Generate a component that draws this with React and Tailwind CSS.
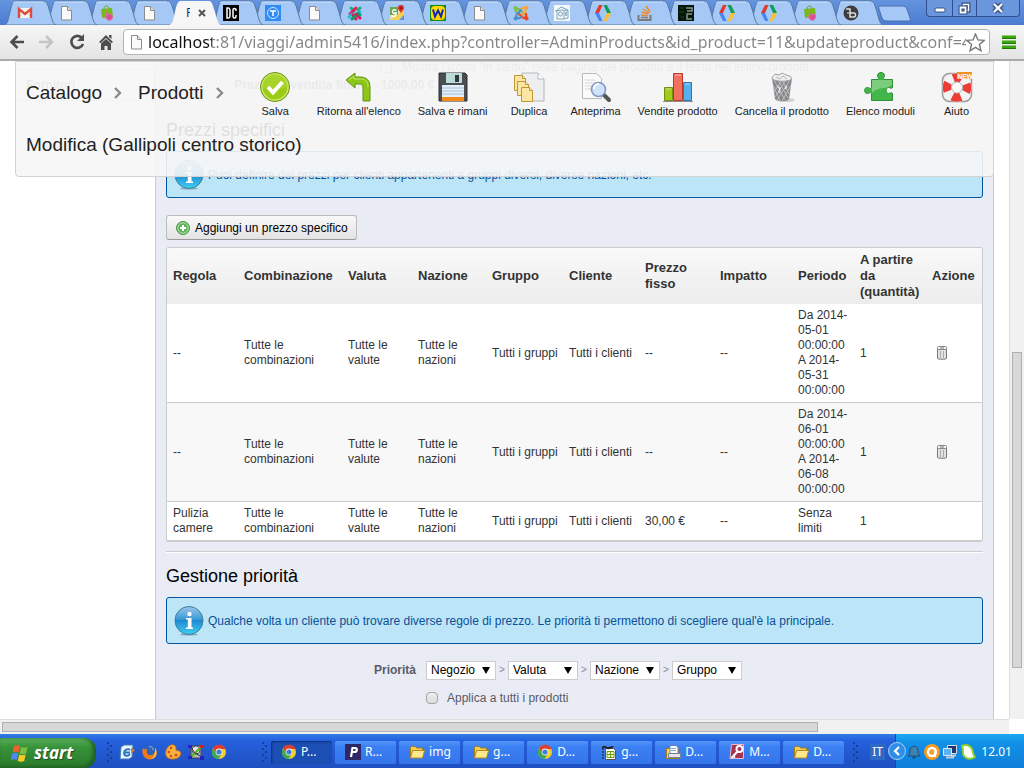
import { useId, useState } from "react";

const cx = (...names) => names.filter(Boolean).join(" ");

/* ---------- favicons ---------- */

const PageIcon = () => (
  <svg viewBox="0 0 16 16" className="size-4">
    <path d="M3.5 1.5h6l4 4v9.500h-10z" fill="#fafafa" stroke="#8b8b8b" />
    <path d="M9.500 1.500v4h4" fill="#e4e4e4" stroke="#8b8b8b" />
  </svg>
);

const GmailIcon = () => (
  <svg viewBox="0 0 16 16" className="size-4">
    <path d="M1 3h14v10H1z" fill="#f4f4f4" />
    <path d="M1 13l5-5M15 13l-5-5" stroke="#cfcfcf" />
    <path d="M2 13V4l6 5 6-5v9" fill="none" stroke="#dd4b39" strokeWidth="2.400" />
  </svg>
);

const PrestaIcon = () => (
  <svg viewBox="0 0 16 16" className="size-4">
    <path d="M5 4c0-4 5-4 5 0" fill="none" stroke="#6c9c10" />
    <path d="M2 4l11-1 1 9-11 1z" fill="#7ab81f" />
    <path d="M7 6l2 3 4 0 1 4-3 3-3-1-3-4 2 0z" fill="#e0629f" />
    <circle cx="10.500" cy="12" r="2.200" fill="#d84e8c" />
  </svg>
);

const DcIcon = () => (
  <svg viewBox="0 0 16 16" className="size-4">
    <path d="M0 0h16v16H0z" fill="#000" />
    <path d="M4 3v10h1c2 0 2-1 2-3V6c0-2 0-3-2-3zM13 6V4.500C13 3 10 3 10 4.500v7c0 2 3 2 3 0V10" fill="none" stroke="#fff" strokeWidth="1.500" />
  </svg>
);

const TIcon = () => (
  <svg viewBox="0 0 16 16" className="size-4">
    <path d="M0 0h16v16H0z" fill="#2f8cf5" />
    <circle cx="8" cy="8" r="5.500" fill="none" stroke="#cfe5ff" />
    <path d="M5 6h6M8 6v5" stroke="#fff" strokeWidth="1.500" />
  </svg>
);

const PinwheelIcon = () => (
  <svg viewBox="0 0 16 16" className="size-4" strokeWidth="3" strokeLinecap="round">
    <path d="M4 3l3 3M13 3l-2 2" stroke="#16b378" />
    <path d="M9 3l-3 3M3 9l3-3" stroke="#e8175d" />
    <path d="M13 7l-3 3M2 12l3-3" stroke="#20bfd4" />
    <path d="M9 9l4 4M6 10l3 4" stroke="#e3165b" />
    <path d="M5 14l3-3M13 10l-2-2" stroke="#0f9b62" />
  </svg>
);

const MapsIcon = () => (
  <svg viewBox="0 0 16 16" className="size-4">
    <path d="M1 2h14v13H1z" fill="#e6dfc8" />
    <path d="M1 2h8v8H1z" fill="#6aa84f" />
    <path d="M1 15L15 5v5l-6 5z" fill="#f5d04e" />
    <path d="M10 15l5-5v5z" fill="#5b8fd6" />
    <path d="M7 5.500a2 2 0 1 0 0 2.500H5M7 7v3c0 2-4 2-4 0" fill="none" stroke="#fff" strokeWidth="1.300" />
    <path d="M12 9c0-3-3-3-3-6a3 3 0 0 1 6 0c0 3-3 3-3 6z" fill="#dc2c22" />
    <circle cx="12" cy="3" r="1" fill="#7d1310" />
  </svg>
);

const WIcon = () => (
  <svg viewBox="0 0 16 16" className="size-4">
    <path d="M0 0h16v16H0z" fill="#148a1c" />
    <rect x="1" y="1" width="14" height="14" rx="4" fill="#ffd900" />
    <path d="M3 4.500l2 7 3-6 3 6 2-7" fill="none" stroke="#1226b8" strokeWidth="2" />
  </svg>
);

const JoomlaIcon = () => (
  <svg viewBox="0 0 16 16" className="size-4" fill="none" strokeWidth="2.200" strokeLinecap="round">
    <path d="M3 7c-1-3 2-4 4-2l4 4" stroke="#7ac143" />
    <path d="M8 4c3-3 6 0 4 3l-4 4" stroke="#f9a541" />
    <path d="M13 9c1 3-2 5-4 3L5 8" stroke="#f44321" />
    <path d="M8 12c-3 3-6 0-4-3l4-4" stroke="#5091cd" />
    <circle cx="2.500" cy="3" r="1" stroke="#7ac143" />
    <circle cx="13.500" cy="2.500" r="1" stroke="#f9a541" />
    <circle cx="13.500" cy="13.500" r="1" stroke="#f44321" />
    <circle cx="2.500" cy="13.500" r="1" stroke="#5091cd" />
  </svg>
);

const HouseIcon = () => (
  <svg viewBox="0 0 16 16" className="size-4" fill="none" stroke="#7fa3bd">
    <path d="M0 0h16v16H0z" fill="#f5f9fb" stroke="none" />
    <path d="M2 6l5-4 7 3v8l-4 1H3V6M10 6v8M1 6l7-1 6 1" />
    <circle cx="6.500" cy="9" r="2" />
    <path d="M12 7v4" strokeWidth="1.500" />
  </svg>
);

const DevIcon = () => (
  <svg viewBox="0 0 16 16" className="size-4">
    <path d="M4 0h3.500L4 8H0z" fill="#e2382b" />
    <path d="M0 8h4l3.500 8H4z" fill="#4a86ee" />
    <path d="M8.500 0H12l4 8h-4z" fill="#109d58" />
    <path d="M12 8h4l-4 8H8.500z" fill="#fbc02d" />
  </svg>
);

const StackIcon = () => (
  <svg viewBox="0 0 16 16" className="size-4" fill="none" strokeWidth="1.500">
    <path d="M1.500 10v5h12v-5" stroke="#7b7b7b" strokeWidth="2" />
    <path d="M4 12.500h7" stroke="#8d7a60" />
    <path d="M4 10l7 .800M4.500 7l6.800 2M6 4l6 4M9 1l4 6" stroke="#f08a24" />
  </svg>
);

const MatrixIcon = () => (
  <svg viewBox="0 0 16 16" className="size-4" fill="none">
    <path d="M0 0h16v16H0z" fill="#07180a" />
    <path d="M2 3h4M1 7h5M3 12h3" stroke="#1c4a20" />
    <path d="M8 3h6v3H9M14 9H9v5h5" stroke="#8b968c" strokeWidth="1.500" />
  </svg>
);

const BIcon = () => (
  <svg viewBox="0 0 16 16" className="size-4">
    <circle cx="8" cy="8" r="7.500" fill="#3d3d3d" />
    <path d="M3 4h4v8h4c2 0 2-4 0-4H7" fill="none" stroke="#ddd" strokeWidth="1.500" />
    <path d="M4 8h3" stroke="#ddd" />
  </svg>
);

const tabs = [
  { name: "Gmail", Icon: GmailIcon },
  { name: "Pagina", Icon: PageIcon },
  { name: "PrestaShop", Icon: PrestaIcon },
  { name: "Pagina", Icon: PageIcon },
  { name: "Prodotti", active: true },
  { name: "DC", Icon: DcIcon },
  { name: "T", Icon: TIcon },
  { name: "Pagina", Icon: PageIcon },
  { name: "Colori", Icon: PinwheelIcon },
  { name: "Maps", Icon: MapsIcon },
  { name: "W", Icon: WIcon },
  { name: "Pagina", Icon: PageIcon },
  { name: "Joomla", Icon: JoomlaIcon },
  { name: "Casa", Icon: HouseIcon },
  { name: "Developers", Icon: DevIcon },
  { name: "Stack", Icon: StackIcon },
  { name: "Matrix", Icon: MatrixIcon },
  { name: "Developers", Icon: DevIcon },
  { name: "Developers", Icon: DevIcon },
  { name: "PrestaShop", Icon: PrestaIcon },
  { name: "B", Icon: BIcon },
];

const Tab = ({ tab, order }) => {
  const { Icon, active, name } = tab;
  return (
    <button
      type="button"
      aria-label={name}
      className="relative flex h-full min-w-0 flex-1 items-center justify-center"
      style={{ zIndex: active ? 40 : order }}
    >
      <svg
        viewBox="0 0 52 25"
        preserveAspectRatio="none"
        className="absolute inset-y-0 left-0 h-full w-[52px]"
      >
        <path
          d="M0 25C4 24 4 20 6 12C8 3 9 1 12 1H39C43 1 43 3 46 12C48 20 49 24 52 25z"
          fill={active ? "#f6f6f6" : "#a6c8f6"}
          stroke={active ? "none" : "#54779f"}
        />
        {!active && <path d="M9 3C10 2 10 2 12 2H39" fill="none" stroke="#c9dffc" />}
      </svg>
      <span className="relative flex items-center">
        {active ? (
          <span className="flex items-center gap-2 pl-3">
            <span className="w-1 overflow-hidden font-['Noto_Sans'] text-xs leading-4 text-[#1d2c7c]">
              P
            </span>
            <svg viewBox="0 0 8 8" className="size-2" stroke="#555" strokeWidth="2">
              <path d="M1 1l6 6M7 1L1 7" />
            </svg>
          </span>
        ) : (
          <Icon />
        )}
      </span>
    </button>
  );
};

const winButton = "flex h-full items-center justify-center border-[#2f4f8f]";

const TabStrip = () => (
  <div className="flex h-[25px] shrink-0 bg-linear-to-b from-[#6594de] to-[#4b7bd0] pl-1">
    <div className="isolate flex min-w-0 flex-1">
      {tabs.map((tab, i) => (
        <Tab key={i} tab={tab} order={30 - i} />
      ))}
    </div>
    <button type="button" aria-label="Nuova scheda" className="ml-[6px] h-full w-9">
      <svg viewBox="0 0 36 25" className="h-[25px] w-9">
        <path
          d="M3 6h21c3 0 4 1 5 3l3 9c1 2 0 3-2 3H9c-3 0-4-1-5-3L1 9C0 7 1 6 3 6z"
          fill="#a6c8f6"
          stroke="#4c70ae"
        />
      </svg>
    </button>
    <div className="mr-1 ml-3 flex h-[17px] w-[94px] rounded-b border border-t-0 border-[#2f4f8f] bg-[#6a96dd]">
      <button type="button" aria-label="Riduci" className={cx(winButton, "w-[26px] border-r")}>
        <svg viewBox="0 0 12 10" className="h-[10px] w-3">
          <rect x="1" y="5" width="10" height="4" rx="1" fill="#fff" stroke="#34507f" />
        </svg>
      </button>
      <button type="button" aria-label="Ripristina" className={cx(winButton, "w-6 border-r")}>
        <svg viewBox="0 0 13 13" className="size-[13px]" fill="none">
          <path d="M5.500 2.500h5v6h-5z" stroke="#34507f" strokeWidth="4" />
          <path d="M5.500 2.500h5v6h-5z" stroke="#fff" strokeWidth="1.500" />
          <path d="M2.500 5.500h5v5h-5z" fill="#6a96dd" stroke="#34507f" strokeWidth="4" />
          <path d="M2.500 5.500h5v5h-5z" stroke="#fff" strokeWidth="1.800" />
        </svg>
      </button>
      <button type="button" aria-label="Chiudi" className={cx(winButton, "flex-1")}>
        <svg viewBox="0 0 13 12" className="h-3 w-[13px]">
          <path d="M2 2l8 8M10 2l-8 8" stroke="#34507f" strokeWidth="5" />
          <path d="M2 2l8 8M10 2l-8 8" stroke="#fff" strokeWidth="2.400" />
        </svg>
      </button>
    </div>
  </div>
);

const AddressBar = () => (
  <div className="flex h-9 shrink-0 items-center border-b-2 border-[#a9a9a9] bg-linear-to-b from-[#f6f6f6] to-[#e4e4e4] pr-2 pl-2">
    <button type="button" aria-label="Indietro" className="mr-3">
      <svg viewBox="0 0 18 18" className="size-[18px]" fill="none" stroke="#4d4d4d" strokeWidth="2.600">
        <path d="M16 9H4M9.500 3L3.500 9l6 6" />
      </svg>
    </button>
    <button type="button" aria-label="Avanti" className="mr-3">
      <svg viewBox="0 0 18 18" className="size-[18px]" fill="none" stroke="#c4c4c4" strokeWidth="2.600">
        <path d="M1 9h12M8 3l6 6-6 6" />
      </svg>
    </button>
    <button type="button" aria-label="Ricarica" className="mr-3">
      <svg viewBox="0 0 18 18" className="size-[18px]">
        <path d="M14 5a6 6 0 1 0 1 6" fill="none" stroke="#4d4d4d" strokeWidth="2.600" />
        <path d="M16 1v7H9z" fill="#4d4d4d" />
      </svg>
    </button>
    <button type="button" aria-label="Home" className="mr-[9px]">
      <svg viewBox="0 0 16 16" className="size-4" fill="#4d4d4d">
        <path d="M8 1l7 7-1.500 1.200L8 4 2.500 9.200 1 8zM11 1h2.500v4L11 3z" />
        <path d="M3 9.500L8 5l5 4.500V16H9.500v-4h-3v4H3z" />
      </svg>
    </button>
    <div className="mr-2 flex h-[26px] min-w-0 flex-1 items-center rounded-sm border border-[#b3b3b3] bg-white px-1">
      <PageIcon />
      <input
        type="text"
        aria-label="Indirizzo"
        readOnly
        value="localhost:81/viaggi/admin5416/index.php?controller=AdminProducts&id_product=11&updateproduct&conf=4&key"
        className="ml-1 min-w-0 flex-1 bg-[linear-gradient(to_right,#111_64px,#858585_64px)] bg-clip-text font-['Noto_Sans',sans-serif] text-base text-transparent outline-none"
      />
      <svg viewBox="0 0 18 18" className="size-[19px] shrink-0" fill="#fff" stroke="#777" strokeWidth="1.300">
        <path d="M9 1l2.300 5.600 6 .400-4.600 3.900 1.500 5.900L9 13.600l-5.200 3.200 1.500-5.900L.7 7l6-.4z" />
      </svg>
    </div>
    <button type="button" aria-label="Menu" className="ml-1">
      <svg viewBox="0 0 14 14" className="size-[14px]">
        <path d="M0 2h14M0 7h14M0 12h14" stroke="#3aa50e" strokeWidth="3" />
        <path d="M0 3.500h14M0 8.500h14M0 13.500h14" stroke="#1f7a04" />
      </svg>
    </button>
  </div>
);

/* ---------- page toolbar icons ---------- */

const SaveIcon = () => (
  <svg viewBox="0 0 32 32" className="size-8">
    <circle cx="16" cy="16" r="14.500" fill="#9ccb16" stroke="#6d8f17" />
    <circle cx="16" cy="16" r="13" fill="none" stroke="#c6e467" strokeWidth="1.500" />
    <path d="M3 16a13 13 0 0 1 26 0c-8 3-18 3-26 0z" fill="#b4dc3a" opacity=".5" />
    <path d="M9 16l5 5.500L23.500 11" fill="none" stroke="#fff" strokeWidth="4" />
  </svg>
);

const BackIcon = () => (
  <svg viewBox="0 0 32 32" className="size-8">
    <path
      d="M3 9l9-7v4h5c7 0 10 4 10 10v14h-7V18c0-4-1-5-4-5h-4v4z"
      fill="#8cc717"
      stroke="#5f9410"
    />
    <path d="M6 9l5-4v3h6c5 0 8 2 8 8" fill="none" stroke="#c3e86a" />
  </svg>
);

const FloppyIcon = () => (
  <svg viewBox="0 0 32 32" className="size-8">
    <path d="M2 2h26l2 2v26H2z" fill="#4a4e52" stroke="#2f3235" />
    <path d="M9 2h16v10H9z" fill="#b9dcd8" />
    <path d="M18 4h4v7h-4z" fill="#34383c" />
    <path d="M5 14h22v12H5z" fill="#e3f0fb" />
    <path d="M5 17h22M5 20h22M5 23h22" stroke="#a8c0d4" />
    <path d="M5 26h22v4H5z" fill="#f28a1c" />
  </svg>
);

const DuplicateIcon = () => (
  <svg viewBox="0 0 32 32" className="size-8">
    <path d="M9 2h16l6 6v22H9z" fill="#eceef0" stroke="#b3b6ba" />
    <path d="M25 2v6h6" fill="#fff" stroke="#b3b6ba" />
    <g fill="#fbe6a2" stroke="#c39434">
      <path d="M1.500 4.500h8l3 3v12h-11z" />
      <path d="M4.500 10.500h8l3 3v11h-11z" />
      <path d="M8.500 16.500h8l3 3v11h-11z" />
      <path d="M9.500 4.500v3h3M12.500 10.500v3h3M16.500 16.500v3h3" fill="#fff6d8" />
    </g>
  </svg>
);

const PreviewIcon = () => (
  <svg viewBox="0 0 32 32" className="size-8">
    <path d="M2.500 2.500h14l5 5v20h-19z" fill="#fafafa" stroke="#bbb" />
    <path d="M5 9h10M5 12h12M5 15h8M5 18h6" stroke="#d6d6d6" />
    <path d="M23 23l6 6" stroke="#555" strokeWidth="4" strokeLinecap="round" />
    <circle cx="18.500" cy="18.500" r="7" fill="#cfe2fa" stroke="#7f97c4" strokeWidth="1.600" />
    <path d="M14 18c0-3 2-5 5-5" fill="none" stroke="#fff" strokeWidth="2" />
  </svg>
);

const ChartIcon = () => (
  <svg viewBox="0 0 32 32" className="size-8">
    <path d="M2.500 16.500h8v13h-8z" fill="#a3c91b" stroke="#71910e" />
    <path d="M21.500 11.500h8v18h-8z" fill="#57b0ee" stroke="#2a78b5" />
    <path d="M11.500 2.500h9v27h-9z" fill="#f4705e" stroke="#b93a2c" />
    <path d="M4 18h5M13 4h6M23 13h5" stroke="#fff" opacity=".5" />
    <path d="M1 30.500h30" stroke="#8d8d8d" />
  </svg>
);

const BinIcon = () => (
  <svg viewBox="0 0 32 32" className="size-8">
    <ellipse cx="20" cy="29" rx="9" ry="2" fill="#d2d2d2" />
    <path d="M6 7l3 21c2 3 12 3 14 0l3-21z" fill="#85878a" />
    <path
      d="M8 9l11 20M12 9l10 18M16 9l7 14M7 14l7 16M24 9L11 29M20 9L9 26M16 9l-8 12M25 14l-9 16"
      stroke="#c9cbcd"
      strokeWidth=".8"
    />
    <path d="M6 8c0-3 2-3 3-5l4 1 3-2 4 2 4 1 2 3c-4 3-15 3-20 0z" fill="#eee" stroke="#a1a1a1" />
    <path d="M10 6l4 2 3-3 4 3" fill="none" stroke="#b5b5b5" />
    <path d="M11 15l3 2-1 5M19 18l2-3" stroke="#e5e5ee" strokeWidth="1.500" fill="none" />
  </svg>
);

const PuzzleIcon = () => (
  <svg viewBox="0 0 32 32" className="size-8">
    <path
      d="M7.500 8.500h7c1-1-1-2-1-4 0-4 7-4 7 0 0 2-2 3-1 4h9v8c-1 2-2 0-4 0-3 0-3 6 0 6 2 0 3-2 4 0v7h-21v-7c-1-2-2 0-4 0-4 0-4-6 0-6 2 0 3 2 4 0z"
      fill="#43b649"
      stroke="#2a9235"
    />
    <path d="M8 9h20v5c-7 5-13 1-20 8z" fill="#a1dca0" opacity=".6" />
  </svg>
);

const HelpIcon = () => (
  <svg viewBox="0 0 32 32" className="size-8">
    <rect x="1.500" y="2.500" width="29" height="28" rx="7" fill="#f2f2f2" stroke="#999" strokeWidth="1.500" />
    <circle cx="16" cy="16.500" r="10" fill="none" stroke="#f3f3f3" strokeWidth="9" />
    <circle
      cx="16"
      cy="16.500"
      r="10"
      fill="none"
      stroke="#ed3b35"
      strokeWidth="8.500"
      strokeDasharray="8.700 7"
      strokeDashoffset="4"
    />
    <circle cx="16" cy="16.500" r="5.500" fill="#fafafa" stroke="#b5b5b5" />
    <path d="M16 1h15v7H16z" fill="#f59322" />
    <text x="16.500" y="7.500" fontSize="6.500" fontWeight="bold" fill="#fff" fontFamily="Liberation Sans">
      NEW
    </text>
  </svg>
);

const actions = [
  { label: "Salva", Icon: SaveIcon },
  { label: "Ritorna all'elenco", Icon: BackIcon },
  { label: "Salva e rimani", Icon: FloppyIcon },
  { label: "Duplica", Icon: DuplicateIcon },
  { label: "Anteprima", Icon: PreviewIcon },
  { label: "Vendite prodotto", Icon: ChartIcon },
  { label: "Cancella il prodotto", Icon: BinIcon },
  { label: "Elenco moduli", Icon: PuzzleIcon },
  { label: "Aiuto", Icon: HelpIcon },
];

const Crumb = ({ children }) => (
  <li className="flex items-center gap-3">
    <a href="#">{children}</a>
    <svg viewBox="0 0 8 12" className="h-3 w-2" fill="none" stroke="#8a8a8a" strokeWidth="2.400">
      <path d="M1 1l5 5-5 5" />
    </svg>
  </li>
);

// Stays on top of the form while the page scrolls
const PageHead = () => (
  <header className="absolute top-0 right-[15px] left-[15px] flex items-start justify-between rounded-b-sm border border-[#d3d3d3] bg-[#f6f6f6]/90 pt-[5px] pr-3 pb-[5px] pl-[10px]">
    <div className="text-[19px] leading-[52px] text-[#222]">
      <ol className="flex gap-4">
        <Crumb>Catalogo</Crumb>
        <Crumb>Prodotti</Crumb>
      </ol>
      <h1 className="w-0 whitespace-nowrap">Modifica (Gallipoli centro storico)</h1>
    </div>
    <ul className="flex gap-[17px] pt-1">
      {actions.map(({ label, Icon }) => (
        <li key={label}>
          <a
            href="#"
            className="flex min-w-[49px] flex-col items-center text-[11px] leading-4 whitespace-nowrap text-[#222]"
          >
            <Icon />
            {label}
          </a>
        </li>
      ))}
    </ul>
  </header>
);

/* ---------- form ---------- */

const InfoBadge = () => {
  const id = useId();
  return (
    <svg viewBox="0 0 30 30" className="size-[30px] shrink-0">
      <defs>
        <linearGradient id={id} x1="0" y1="0" x2="0" y2="1">
          <stop offset="0" stopColor="#9cc6e8" />
          <stop offset=".45" stopColor="#3d9bd8" />
          <stop offset=".5" stopColor="#1f8ad2" />
          <stop offset="1" stopColor="#3fd0f2" />
        </linearGradient>
      </defs>
      <ellipse cx="15" cy="28.500" rx="9" ry="1" fill="#8aa5b5" />
      <circle cx="15" cy="14.500" r="14" fill={`url(#${id})`} stroke="#3f7f9c" />
      <circle cx="15.500" cy="8" r="2.200" fill="#fff" />
      <path d="M12 12h5.500v9.500H19V23h-7v-1.500h1.800v-8H12z" fill="#fff" />
    </svg>
  );
};

const Hint = ({ children }) => (
  <p className="mt-[9px] flex h-[47px] items-center gap-1 rounded-[3px] border border-[#0057a0] bg-[#bce5f7] px-[7px] text-xs text-[#0b5099]">
    <InfoBadge />
    {children}
  </p>
);

const Rule = ({ className }) => (
  <hr className={cx("border-t border-b border-t-[#ccc] border-b-white", className)} />
);

const SmallBin = () => (
  <svg viewBox="0 0 12 16" className="h-4 w-3">
    <path d="M1.500 3.500h9v10c0 1-9 1-9 0z" fill="#e3e3e3" stroke="#777" />
    <path d="M4.500 6v7M7.500 6v7" stroke="#aaa" />
    <rect x="1.500" y="1.500" width="9" height="3" rx="1" fill="#f3f3f3" stroke="#888" />
    <path d="M4 3h4" stroke="#777" />
  </svg>
);

const columns = [
  ["Regola", "w-[71px]"],
  ["Combinazione", "w-[104px]"],
  ["Valuta", "w-[70px]"],
  ["Nazione", "w-[74px]"],
  ["Gruppo", "w-[77px]"],
  ["Cliente", "w-[76px]"],
  ["Prezzo fisso", "w-[75px]"],
  ["Impatto", "w-[78px]"],
  ["Periodo", "w-[62px]"],
  ["A partire da (quantità)", "w-[72px]"],
  ["Azione", "w-[56px]"],
];

const rules = [
  { rule: "--", price: "--", period: ["Da 2014-05-01 00:00:00", "A 2014-05-31 00:00:00"], removable: true },
  { rule: "--", price: "--", period: ["Da 2014-06-01 00:00:00", "A 2014-06-08 00:00:00"], removable: true },
  { rule: "Pulizia camere", price: "30,00 €", period: ["Senza limiti"] },
];

const PriceTable = () => (
  <div className="mt-[7px] overflow-hidden rounded-[3px] border border-b-2 border-[#ccc]">
    <table className="w-full table-fixed text-left text-xs leading-[15px] text-[#333]">
      <thead>
        <tr className="bg-linear-to-b from-[#f9f9f9] to-[#ececec] text-[13px] leading-4">
          {columns.map(([title, width]) => (
            <th key={title} className={cx("py-1 pl-[6px]", width)}>
              {title}
            </th>
          ))}
        </tr>
      </thead>
      <tbody>
        {rules.map((r, i) => (
          <tr
            key={i}
            className="border-b border-[#ccc] bg-white *:py-1 *:pl-[6px] last:border-b-0 even:bg-[#f8f8f8]"
          >
            <td>{r.rule}</td>
            <td>Tutte le combinazioni</td>
            <td className="pr-3">Tutte le valute</td>
            <td className="pr-3">Tutte le nazioni</td>
            <td>Tutti i gruppi</td>
            <td>Tutti i clienti</td>
            <td>{r.price}</td>
            <td>--</td>
            <td>
              {r.period.map((line) => (
                <div key={line}>{line}</div>
              ))}
            </td>
            <td>1</td>
            <td>
              {r.removable && (
                <button type="button" aria-label="Elimina" className="ml-1 block">
                  <SmallBin />
                </button>
              )}
            </td>
          </tr>
        ))}
      </tbody>
    </table>
  </div>
);

const priorities = ["Negozio", "Valuta", "Nazione", "Gruppo"];

const PrioritySelect = ({ initial, id }) => {
  const [value, setValue] = useState(initial);
  return (
    <span className="relative">
      <select
        id={id}
        aria-label={id ? undefined : initial}
        value={value}
        onChange={(e) => setValue(e.target.value)}
        className="block h-[19px] w-[70px] appearance-none border border-[#ccc] bg-white pl-1 text-xs leading-4 text-black"
      >
        {priorities.map((p) => (
          <option key={p}>{p}</option>
        ))}
      </select>
      <svg viewBox="0 0 8 7" className="pointer-events-none absolute top-[6px] right-[6px] h-[7px] w-2">
        <path d="M0 0h8L4 7z" fill="#000" />
      </svg>
    </span>
  );
};

const ProductForm = () => (
  <section className="min-w-0 flex-1 border-x border-[#c8cbd2] bg-[#e9ecf5] px-[10px] text-xs text-[#5a5a66]">
    <div className="flex h-3 items-center gap-[10px] pl-[214px] text-[#888]">
      <input id="on-sale" type="checkbox" className="size-3 appearance-none rounded-sm border border-[#999]" />
      <label htmlFor="on-sale" className="whitespace-nowrap">
        Mostra l'icona "in saldo" nella pagina del prodotto e il testo nel listino prodotti.
      </label>
    </div>
    <div className="flex h-6 items-center gap-[10px] font-bold text-[#777]">
      <span className="w-[205px] text-right">Prezzo di vendita finale:</span>
      <span>1000.00 €</span>
    </div>
    <Rule className="mt-2" />
    <h3 className="mt-[11px] text-lg leading-6 text-black">Prezzi specifici</h3>
    <Hint>Puoi definire dei prezzi per clienti appartenenti a gruppi diversi, diverse nazioni, etc.</Hint>
    <button
      type="button"
      className="mt-[17px] flex h-[25px] items-center gap-1 rounded-[3px] border border-[#bbb] border-b-[#999] bg-linear-to-b from-[#f9f9f9] to-[#e3e3e3] pr-2 pl-2 text-xs text-black"
    >
      <svg viewBox="0 0 16 16" className="size-4">
        <circle cx="8" cy="8" r="6.500" fill="#5fb45c" stroke="#4b9a4c" />
        <circle cx="8" cy="8" r="5.200" fill="none" stroke="#b5deb1" />
        <path d="M8 5v6M5 8h6" stroke="#fff" strokeWidth="2" />
      </svg>
      Aggiungi un prezzo specifico
    </button>
    <PriceTable />
    <Rule className="mt-[9px]" />
    <h3 className="mt-[11px] text-lg leading-6 text-black">Gestione priorità</h3>
    <Hint>
      Qualche volta un cliente può trovare diverse regole di prezzo. Le priorità ti permettono di
      scegliere qual'è la principale.
    </Hint>
    <div className="mt-4 flex h-5 items-center">
      <label htmlFor="priority" className="w-[250px] pr-0 text-right font-bold">
        Priorità
      </label>
      <div className="ml-[10px] flex items-center">
        {priorities.map((p, i) => (
          <div key={p} className="flex items-center">
            {i > 0 && <span className="w-3 text-center text-[10px] text-[#888]">&gt;</span>}
            <PrioritySelect initial={p} id={i === 0 ? "priority" : undefined} />
          </div>
        ))}
      </div>
    </div>
    <div className="mt-2 flex h-5 items-center gap-[9px] pl-[260px]">
      <input
        id="apply-all"
        type="checkbox"
        className="size-3 appearance-none rounded-sm border border-[#a3a3a3] bg-linear-to-b from-[#eee] to-[#dcdcdc]"
      />
      <label htmlFor="apply-all">Applica a tutti i prodotti</label>
    </div>
  </section>
);

/* ---------- taskbar ---------- */

const ChromeIcon = () => (
  <svg viewBox="0 0 16 16" className="size-4">
    <circle cx="8" cy="8" r="7" fill="#f7cb2d" />
    <path d="M2 4.300A7 7 0 0 1 14.500 5H8L5 9.500z" fill="#df3d30" />
    <path d="M1.800 4.600A7 7 0 0 0 7.500 15L11 9.500 5 9z" fill="#3ba94f" />
    <circle cx="8" cy="8" r="3.400" fill="#f4f4f4" />
    <circle cx="8" cy="8" r="2.600" fill="#3f7fd9" />
  </svg>
);

const FolderIcon = () => (
  <svg viewBox="0 0 16 16" className="size-4">
    <path d="M1.500 3.500l1-1h4l1 1.500h6v9h-12z" fill="#f3cf55" stroke="#a57d16" />
    <path d="M3.500 6.500h12l-2 7.500h-12z" fill="#ffe98c" stroke="#b58c1e" />
  </svg>
);

const PTileIcon = () => (
  <svg viewBox="0 0 16 16" className="size-4">
    <path d="M0 0h16v16H0z" fill="#2d2766" />
    <path d="M6 13l1.500-9H10c3 0 2 4-.5 4H7" fill="none" stroke="#fff" strokeWidth="2.200" />
  </svg>
);

const SheetIcon = () => (
  <svg viewBox="0 0 16 16" className="size-4">
    <path d="M4.500 4.500h8l2 2v9h-10z" fill="#fff" stroke="#555" />
    <path d="M1 3c3-3 4 1 7 0 2 0 3-2 5 0-3 1-4 3-7 2S3 3 1 5z" fill="#222" />
    <path d="M2 4v11" stroke="#111" strokeDasharray="2 1" />
    <path d="M6 7.500h7v6H6zM9.500 7.500v6M6 10.500h7" fill="#eef7cd" stroke="#6e9a12" />
  </svg>
);

const PrintFolderIcon = () => (
  <svg viewBox="0 0 16 16" className="size-4">
    <path d="M1.500 4.500h12v10h-12z" fill="#f6d768" stroke="#a37c17" />
    <path d="M5 1.500h6l2 2V10H5z" fill="#fff" stroke="#6d87b8" />
    <path d="M6 4.500h5M6 6.500h5" stroke="#86a6e0" />
    <path d="M3.500 9.500h12v4h-12z" fill="#e4e7ee" stroke="#77819a" />
  </svg>
);

const KeyIcon = () => (
  <svg viewBox="0 0 16 16" className="size-4">
    <path d="M2.500.5h12v14H1z" fill="#a63350" stroke="#e8bcc6" />
    <circle cx="10.500" cy="5" r="3" fill="none" stroke="#fff" strokeWidth="2" />
    <path d="M8.500 7.500L2.500 14M4 12l2 1.500" stroke="#fff" strokeWidth="2" />
  </svg>
);

const DesktopIcon = () => (
  <svg viewBox="0 0 16 16" className="size-4">
    <path d="M2 3l3-2h9l-1 12-3 2H1z" fill="#eaf4fc" stroke="#3e7fb5" />
    <path d="M11 6c-2-2-6 0-6 3s4 4 6 1M6 8.500h5" fill="none" stroke="#2472bd" strokeWidth="1.800" />
    <path d="M12 4l4 2-4 4z" fill="#d77d28" />
  </svg>
);

const FirefoxIcon = () => (
  <svg viewBox="0 0 16 16" className="size-4">
    <circle cx="8" cy="8" r="7" fill="#2d63b8" />
    <path d="M1 4c1 2 2 1 4 1 0 3-1 5 2 6 4 1 7-2 6-7 3 4 2 11-5 11.500C2 15.500-1 9 1 4z" fill="#ef7a1a" />
    <path d="M13 4c3 4 2 10-4 11 4-3 4-6 4-11z" fill="#fcc43b" />
    <path d="M7 3c2-1 4 0 4 3" fill="none" stroke="#8fc0ef" />
  </svg>
);

const PaletteIcon = () => (
  <svg viewBox="0 0 16 16" className="size-4">
    <path
      d="M6 1c5-1 5 3 5 5s5-1 4.500 4c-.5 4-5 5-8.500 5C2 15 0 11 1 7c1-3 2-5 5-6z"
      fill="#fbb040"
      stroke="#d8761a"
    />
    <g fill="#c9541b">
      <circle cx="6" cy="4" r="1.300" />
      <circle cx="3.800" cy="8" r="1.300" />
      <circle cx="6" cy="12" r="1.300" />
      <circle cx="11" cy="11" r="1.500" />
    </g>
  </svg>
);

const VectorIcon = () => (
  <svg viewBox="0 0 16 16" className="size-4">
    <path d="M3 2h10v12H3z" fill="#b5b5b5" stroke="#444" />
    <circle cx="8" cy="6" r="4" fill="#e4e4e4" stroke="#555" />
    <path d="M2 14L14 2" stroke="#53b224" strokeWidth="2" />
    <path d="M2 2l5 7 7 4" fill="none" stroke="#333" />
    <path d="M0 1h4v3H0zM12 12h4v4h-4z" fill="#2520c8" />
    <path d="M0 12h4v3H0z" fill="#2520c8" />
    <path d="M12 1h4v3h-4z" fill="#d61f1f" />
  </svg>
);

const BellIcon = () => (
  <svg viewBox="0 0 16 16" className="size-4">
    <path d="M2 12c2-2 2-3 2-6 0-5 8-5 8 0 0 3 0 4 2 6z" fill="#3f82ad" stroke="#1d4a78" />
    <path d="M6.500 13.500h3" stroke="#1d4a78" strokeWidth="2" />
  </svg>
);

const AvastIcon = () => (
  <svg viewBox="0 0 16 16" className="size-4">
    <circle cx="8" cy="8" r="8" fill="#f59a23" />
    <circle cx="8" cy="8" r="4" fill="none" stroke="#fff" strokeWidth="2.400" />
    <path d="M11 7v6" stroke="#fff" strokeWidth="2.200" />
  </svg>
);

const NetworkIcon = () => (
  <svg viewBox="0 0 16 16" className="size-4">
    <path d="M5.500 1.500h9v8h-9z" fill="#20386f" stroke="#d9dde6" />
    <path d="M1.500 4.500h8v7h-8z" fill="#5ab2f3" stroke="#e3e8ef" />
    <path d="M4 13.500h8M9 11.500h5" stroke="#c8ccd6" strokeWidth="2" />
  </svg>
);

const LeafIcon = () => (
  <svg viewBox="0 0 16 16" className="size-4">
    <path
      d="M2 2c4-2 8-1 10 3 1 2 0 4 3 8-4 3-9 2-11-1-2-2 0-5-2-10z"
      fill="#fff"
      stroke="#8fcf2c"
      strokeWidth="2"
    />
  </svg>
);

const tasks = [
  { label: "P...", Icon: ChromeIcon, active: true },
  { label: "R...", Icon: PTileIcon },
  { label: "img", Icon: FolderIcon },
  { label: "g...", Icon: FolderIcon },
  { label: "D...", Icon: ChromeIcon },
  { label: "g...", Icon: SheetIcon },
  { label: "D...", Icon: PrintFolderIcon },
  { label: "M...", Icon: KeyIcon },
  { label: "D...", Icon: FolderIcon },
];

const quickLaunch = [
  ["Desktop", DesktopIcon],
  ["Firefox", FirefoxIcon],
  ["Paint", PaletteIcon],
  ["Vector", VectorIcon],
  ["Chrome", ChromeIcon],
];

const Grip = () => (
  <svg viewBox="0 0 6 22" className="h-[22px] w-[6px] shrink-0" fill="#163f9c">
    <path d="M1 1h2v2H1zM4 4h2v2H4zM1 7h2v2H1zM4 10h2v2H4zM1 13h2v2H1zM4 16h2v2H4zM1 19h2v2H1z" />
  </svg>
);

const Taskbar = () => (
  <footer className="flex h-[34px] shrink-0 items-stretch bg-linear-to-b from-[#2f7ae8] via-[#2560dc] via-20% to-[#1f4fc0] font-['Noto_Sans',sans-serif] text-xs text-white">
    <button
      type="button"
      className="mt-1 flex w-24 shrink-0 items-center gap-1 rounded-r-xl bg-linear-to-b from-[#5dae5b] via-[#37933a] via-30% to-[#2a7a2c] pl-[10px] shadow-[inset_-3px_-1px_4px_#1d5a20]"
    >
      <svg viewBox="0 0 20 18" className="h-[18px] w-5">
        <path d="M4 2c2-1 4-1 6 0L8.500 8.500c-2-1-4-1-6 0z" fill="#f0622c" />
        <path d="M11 3c2 1 4 1 6.500 0L16 9.500c-2 1-4 1-6.500 0z" fill="#7cc043" />
        <path d="M2.200 9.500c2-1 4-1 6 0L6.700 16c-2-1-4-1-6 0z" fill="#4f8bef" />
        <path d="M9.200 10.500c2 1 4 1 6.500 0L14.200 17c-2 1-4 1-6.500 0z" fill="#f9c927" />
      </svg>
      <span className="font-['Open_Sans',sans-serif] text-[17px] leading-6 font-bold italic [text-shadow:1px_1px_1px_#1b4d1d]">
        start
      </span>
    </button>
    <div className="flex shrink-0 items-center gap-[7px] pt-[2px] pl-[10px]">
      <Grip />
      {quickLaunch.map(([name, Icon]) => (
        <button key={name} type="button" aria-label={name}>
          <Icon />
        </button>
      ))}
    </div>
    <div className="flex min-w-0 flex-1 items-center gap-[3px] pt-[2px] pl-[34px]">
      <Grip />
      {tasks.map(({ label, Icon, active }, i) => (
        <button
          key={i}
          type="button"
          className={cx(
            "flex h-[23px] min-w-0 flex-1 items-center gap-1 rounded-xs pl-[10px]",
            active
              ? "ml-[1px] bg-[#1c4fb4] shadow-[inset_1px_1px_2px_#0f2f7c]"
              : "bg-linear-to-b from-[#5596fb] via-[#3b80f4] via-25% to-[#3474ea]"
          )}
        >
          <Icon />
          {label}
        </button>
      ))}
    </div>
    <div className="flex shrink-0 items-center gap-3 pt-[2px] pr-[10px] pl-2">
      <Grip />
      <span className="bg-[#316ac5] px-[2px] leading-4">IT</span>
    </div>
    <div className="relative flex w-[129px] shrink-0 items-center border-l border-[#0c4fb0] bg-linear-to-b from-[#1fa8f3] via-[#1290e8] via-25% to-[#0f7fd8] pt-[2px] pr-3 pl-[10px]">
      <button type="button" aria-label="Mostra icone nascoste" className="absolute top-2 -left-2">
        <svg viewBox="0 0 18 18" className="size-[18px]">
          <circle cx="9" cy="9" r="8.500" fill="#2f8fe8" stroke="#a6d3f8" />
          <path d="M11 5L7 9l4 4" fill="none" stroke="#fff" strokeWidth="2.200" />
        </svg>
      </button>
      <div className="flex flex-1 items-center gap-[2px]">
        <BellIcon />
        <AvastIcon />
        <NetworkIcon />
        <LeafIcon />
      </div>
      <time>12.01</time>
    </div>
  </footer>
);

const App = () => (
  <div className="flex h-screen flex-col overflow-hidden bg-white font-['Liberation_Sans',Arial,sans-serif]">
    <TabStrip />
    <AddressBar />
    <div className="flex min-h-0 flex-1">
      <div className="flex min-w-0 flex-1 flex-col">
        <main className="relative flex min-h-0 flex-1 overflow-hidden pr-[15px]">
          <nav className="w-[155px] shrink-0 pl-[15px] text-xs font-bold text-[#888]">
            <a href="#" className="mt-2 block h-8 border border-[#ccc] pl-[10px] leading-[30px]">
              Fornitori
            </a>
          </nav>
          <ProductForm />
          <PageHead />
        </main>
        <div className="h-[15px] shrink-0 border-t border-[#ddd] bg-[#f1f1f1] py-[2px] pl-[2px]">
          <div className="h-[10px] w-[81%] border border-[#b0b0b0] bg-[#d8d8d8]" />
        </div>
      </div>
      <div className="flex w-[15px] shrink-0 flex-col">
        <div className="flex flex-1 flex-col border-l border-[#ddd] bg-[#f1f1f1] px-[2px]">
          <div className="flex-[292]" />
          <div className="flex-[315] border border-[#b0b0b0] bg-[#d8d8d8]" />
          <div className="flex-[51]" />
        </div>
        <div className="h-[15px] bg-white" />
      </div>
    </div>
    <Taskbar />
  </div>
);

export default App;
